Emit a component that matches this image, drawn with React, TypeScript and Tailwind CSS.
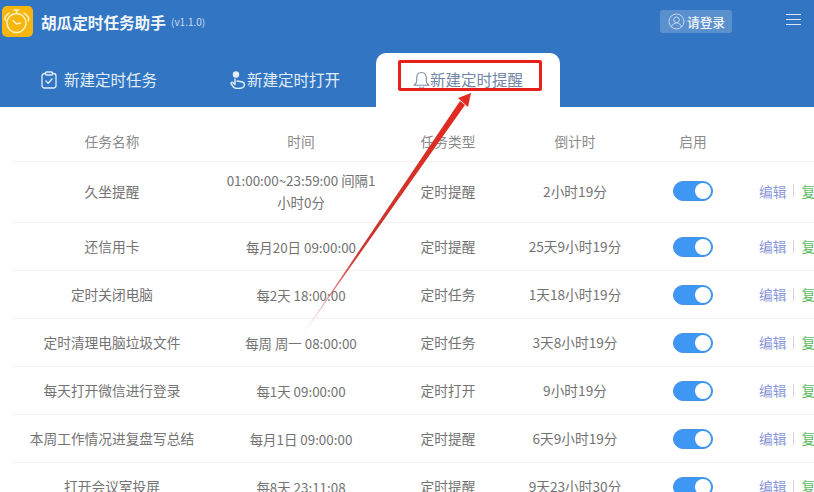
const COLS = "grid grid-cols-[200px_178px_116px_138px_98px_1fr] items-center";

const ROWS = [
  { name: "久坐提醒", time: "01:00:00~23:59:00 间隔1小时0分", type: "定时提醒", left: "2小时19分", h: "h-[61px] pb-[2px]" },
  { name: "还信用卡", time: "每月20日 09:00:00", type: "定时提醒", left: "25天9小时19分", h: "h-[48px]" },
  { name: "定时关闭电脑", time: "每2天 18:00:00", type: "定时任务", left: "1天18小时19分", h: "h-[48px]" },
  { name: "定时清理电脑垃圾文件", time: "每周 周一 08:00:00", type: "定时任务", left: "3天8小时19分", h: "h-[48px]" },
  { name: "每天打开微信进行登录", time: "每1天 09:00:00", type: "定时打开", left: "9小时19分", h: "h-[48px]" },
  { name: "本周工作情况进复盘写总结", time: "每月1日 09:00:00", type: "定时提醒", left: "6天9小时19分", h: "h-[48px]" },
  { name: "打开会议室投屏", time: "每8天 23:11:08", type: "定时提醒", left: "9天23小时30分", h: "h-[48px]" },
];

function Logo() {
  return (
    <div className="flex h-[31px] w-[31px] shrink-0 items-center justify-center rounded-[5px] bg-[#f7b60f]">
      <svg width="29" height="27" viewBox="0 0 29 27" fill="none" stroke="#fff2bd" strokeWidth="1.5" strokeLinecap="round">
        <circle cx="13.5" cy="15" r="9.5" />
        <path d="M11 2h5M13.5 2v3.500M6 5 3 8c-1.500 1.500-1.200 3-.5 4.500M21 5l4 3.500c1.200 1.500 1 3 .2 4.500M13.500 16l-3.500-3.500M13.500 16l4-1" />
      </svg>
    </div>
  );
}

function ClipboardIcon() {
  return (
    <svg width="16" height="18" viewBox="0 0 16 18" fill="none" stroke="#e3edf8" strokeWidth="1.3" strokeLinecap="round" strokeLinejoin="round">
      <rect x="1" y="2.5" width="14" height="14.5" rx="2.5" />
      <rect x="4.5" y="1" width="7" height="3" rx="1" fill="#3276c3" />
      <path d="m5 10 2.200 2.200L11 8" />
    </svg>
  );
}

function HandIcon() {
  return (
    <svg width="16" height="18" viewBox="0 0 16 18" fill="none" stroke="#e3edf8" strokeWidth="1.4" strokeLinecap="round" strokeLinejoin="round">
      <circle cx="6" cy="3.500" r="3.200" fill="#e3edf8" stroke="none" />
      <path d="M5 8v5.500L2.800 11.500c-1-.8-2.300.3-1.500 1.500l2.200 3c1 1 2.500 1.500 4.500 1.500 3.500 0 6.500-1.300 6.500-3.700 0-1.800-1.200-2.700-3-3l-4.500-.8" />
    </svg>
  );
}

function BellIcon() {
  return (
    <svg width="17" height="18" viewBox="0 0 17 18" fill="none" stroke="#7d8fa8" strokeWidth="1.1" strokeLinecap="round" strokeLinejoin="round">
      <path d="M8.500 1.500c-3 0-4.800 2.200-4.800 5.200v3.500c0 1.500-1.200 3-2.700 4h15c-1.500-1-2.700-2.500-2.700-4V6.700c0-3-1.800-5.200-4.800-5.200Z" />
      <path d="M6.500 16c.5.800 1.100 1.200 2 1.200s1.500-.4 2-1.200" />
    </svg>
  );
}

function UserIcon() {
  return (
    <svg width="17" height="17" viewBox="0 0 17 17" fill="none" stroke="#c5daf0" strokeWidth="1">
      <circle cx="8.500" cy="8.500" r="7.500" />
      <circle cx="8.500" cy="6.800" r="2.800" />
      <path d="M3.500 14c.6-2.600 2.500-4 5-4s4.400 1.400 5 4" />
    </svg>
  );
}

function Toggle() {
  return (
    <div className="mx-auto flex h-5 w-10 items-center justify-end rounded-full border border-[#4a90e2] bg-[#3d97f5] pr-[1px]">
      <div className="h-[16px] w-[16px] rounded-full bg-white" />
    </div>
  );
}

export default function App() {
  return (
    <div className="relative h-[492px] w-[814px] overflow-hidden bg-white font-['Noto_Sans_CJK_SC','Liberation_Sans',sans-serif] text-[13.7px] text-[#737373]">
      <header className="h-[107px] bg-[#3276c3]">
        <div className="flex h-[53px] items-start pl-[2px] pt-[6px]">
          <Logo />
          <span className="ml-[8px] mt-[6px] w-[125px] whitespace-nowrap text-[15.6px] leading-[20px] font-bold text-[#f2f6fb]">胡瓜定时任务助手</span>
          <span className="ml-[5px] mt-[8px] w-[34px] whitespace-nowrap text-[10px] leading-[16px] text-[#c9dcf0]">(v1.1.0)</span>
          <div className="ml-[455px] mt-[4px] flex h-[23px] w-[72px] items-center gap-[2px] rounded-[3px] bg-[#5a90cd] pl-[8px] text-[12.7px] font-medium text-[#f2f6fb]">
            <UserIcon />
            <span>请登录</span>
          </div>
          <div className="ml-[54px] mt-[8px] flex w-[15px] flex-col gap-[4px]">
            <div className="h-[1px] bg-[#dce8f5]" />
            <div className="h-[1px] bg-[#dce8f5]" />
            <div className="h-[1px] bg-[#dce8f5]" />
          </div>
        </div>
        <nav className="flex h-[54px] text-[15.5px] text-[#e3edf8]">
          <div className="flex w-[192px] items-center pb-[1px] pl-[41px]">
            <ClipboardIcon />
            <span className="ml-[7px]">新建定时任务</span>
          </div>
          <div className="flex w-[182px] items-center pb-[1px] pl-[38px]">
            <HandIcon />
            <span className="ml-[1px]">新建定时打开</span>
          </div>
          <div className="ml-[2px] flex w-[184px] items-center rounded-t-[10px] bg-white pb-[1px] pl-[37px] text-[#7287a6]">
            <BellIcon />
            <span>新建定时提醒</span>
          </div>
        </nav>
      </header>

      <main className="pl-[12px]">
        <div className={`${COLS} h-[55px] items-end border-b border-[#f2f2f2] pb-[9px] text-center text-[#8a8a8a]`}>
          <div>任务名称</div>
          <div>时间</div>
          <div>任务类型</div>
          <div>倒计时</div>
          <div>启用</div>
          <div />
        </div>
        {ROWS.map((row) => (
          <div key={row.name} className={`${COLS} ${row.h} border-b border-[#f2f2f2] text-center`}>
            <div className="whitespace-nowrap">{row.name}</div>
            <div className="px-[12px] text-[13.4px] leading-[22px]">{row.time}</div>
            <div>{row.type}</div>
            <div className="whitespace-nowrap">{row.left}</div>
            <Toggle />
            <div className="flex items-center whitespace-nowrap pl-[17px] text-[13.7px]">
              <span className="text-[#8a97d6]">编辑</span>
              <span className="mx-[7px] h-[13px] w-[1px] bg-[#d8d8d8]" />
              <span className="text-[#5dbb63]">复制</span>
            </div>
          </div>
        ))}
      </main>

      {/* annotation drawn over the screenshot */}
      <div className="absolute left-[398px] top-[60px] h-[31px] w-[144px] rounded-[2px] border-[3px] border-[#e8201c]" />
      <svg className="absolute left-0 top-0" width="814" height="492" fill="none">
        <defs>
          <linearGradient id="arrow" gradientUnits="userSpaceOnUse" x1="300" y1="338" x2="470" y2="97">
            <stop offset="0" stopColor="#e8201c" stopOpacity="0.1" />
            <stop offset="0.35" stopColor="#c9372e" />
            <stop offset="1" stopColor="#e22a20" />
          </linearGradient>
        </defs>
        <polygon points="301,337 460,101 465,105" fill="url(#arrow)" />
        <polygon points="471,93 458,98 468,107" fill="#e22a20" />
      </svg>
    </div>
  );
}
